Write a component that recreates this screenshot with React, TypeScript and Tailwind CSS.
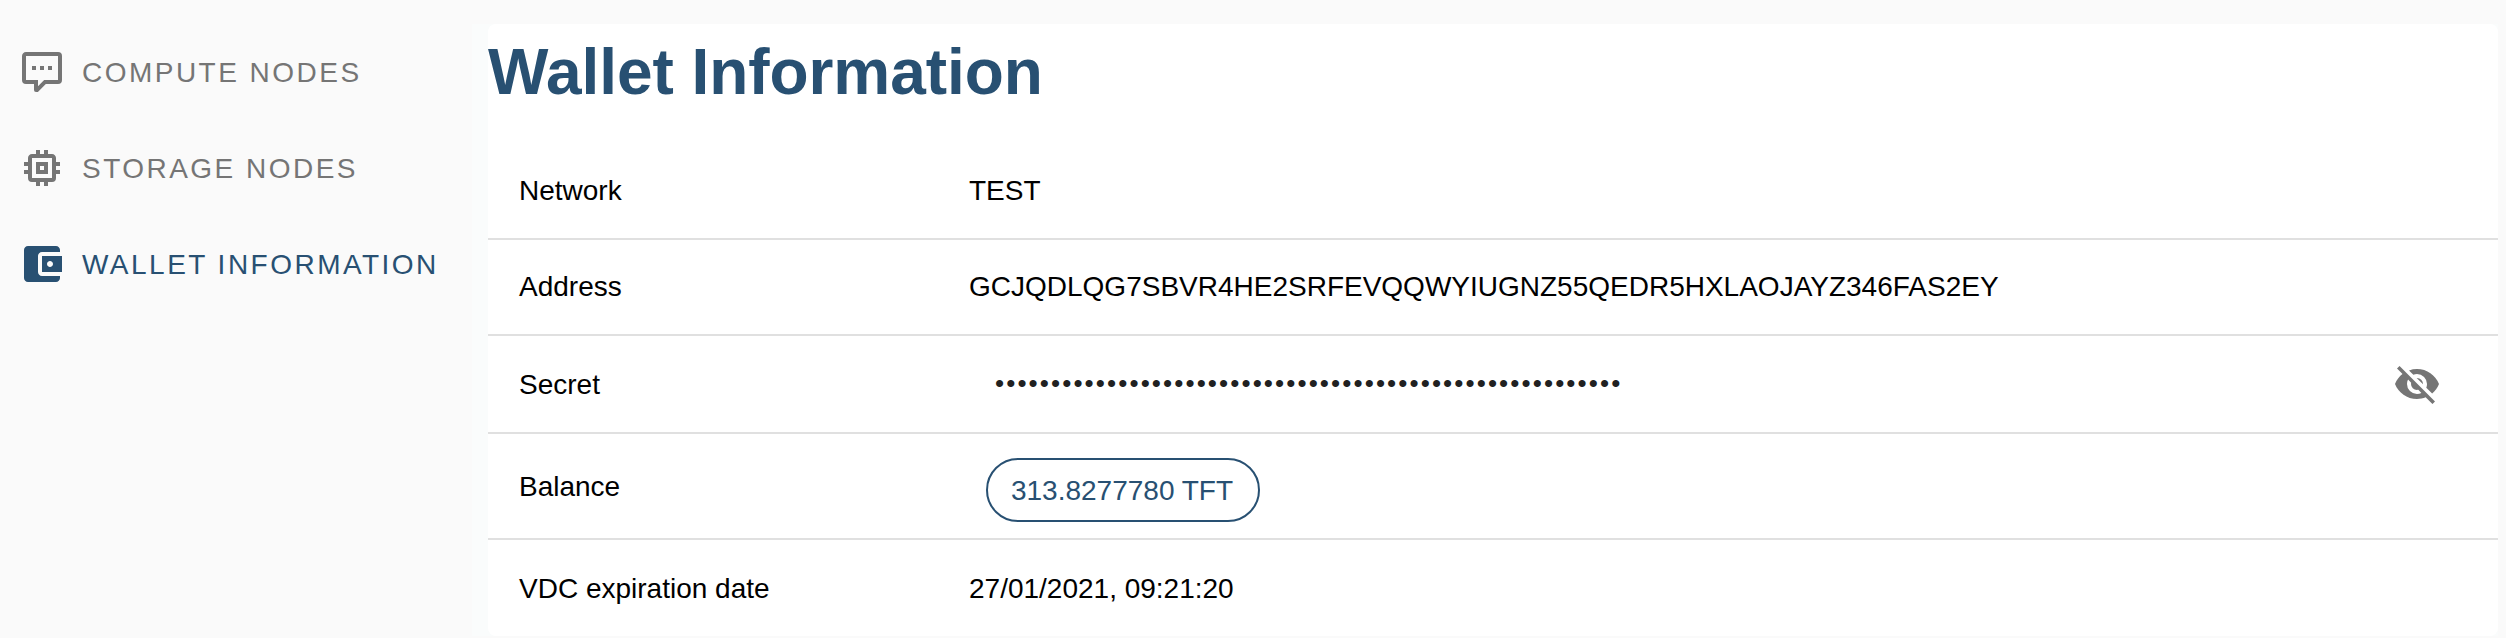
import type { ReactNode } from "react";

const icons = {
  compute:
    "M9,22A1,1 0 0,1 8,21V18H4A2,2 0 0,1 2,16V4C2,2.89 2.9,2 4,2H20A2,2 0 0,1 22,4V16A2,2 0 0,1 20,18H13.9L10.2,21.71C10,21.9 9.75,22 9.5,22V22H9M10,16V19.08L13.08,16H20V4H4V16H10M17,11H15V9H17V11M13,11H11V9H13V11M9,11H7V9H9V11Z",
  storage:
    "M17,17H7V7H17M21,11V9H19V7C19,5.89 18.1,5 17,5H15V3H13V5H11V3H9V5H7C5.89,5 5,5.89 5,7V9H3V11H5V13H3V15H5V17A2,2 0 0,0 7,19H9V21H11V19H13V21H15V19H17A2,2 0 0,0 19,17V15H21V13H19V11M13,13H11V11H13M15,9H9V15H15V9Z",
  wallet:
    "M21 18v1c0 1.1-.9 2-2 2H5c-1.11 0-2-.9-2-2V5c0-1.1.89-2 2-2h14c1.1 0 2 .9 2 2v1h-9c-1.11 0-2 .9-2 2v8c0 1.1.89 2 2 2h9zm-9-2h10V8H12v8zm4-2.5c-.83 0-1.5-.67-1.5-1.5s.67-1.5 1.5-1.5 1.5.67 1.5 1.5-.67 1.5-1.5 1.5z",
  eyeOff:
    "M11.83,9L15,12.16C15,12.11 15,12.05 15,12A3,3 0 0,0 12,9C11.94,9 11.89,9 11.83,9M7.53,9.8L9.08,11.35C9.03,11.56 9,11.77 9,12A3,3 0 0,0 12,15C12.22,15 12.44,14.97 12.65,14.92L14.2,16.47C13.53,16.8 12.79,17 12,17A5,5 0 0,1 7,12C7,11.21 7.2,10.47 7.53,9.8M2,4.27L4.28,6.55L4.73,7C3.08,8.3 1.78,10 1,12C2.73,16.39 7,19.5 12,19.5C13.55,19.5 15.03,19.2 16.38,18.66L16.81,19.08L19.73,22L21,20.73L3.27,3M12,7A5,5 0 0,1 17,12C17,12.64 16.87,13.26 16.64,13.82L19.57,16.75C21.07,15.5 22.27,13.86 23,12C21.27,7.61 17,4.5 12,4.5C10.6,4.5 9.26,4.75 8,5.2L10.17,7.35C10.74,7.13 11.35,7 12,7Z",
};

function Icon({ path }: { path: string }) {
  return (
    <svg viewBox="0 0 24 24" className="block size-12 shrink-0 fill-current" aria-hidden="true">
      <path d={path} />
    </svg>
  );
}

function NavItem({ path, label, active = false }: { path: string; label: string; active?: boolean }) {
  return (
    <a className={`flex h-24 items-center gap-4 pl-[18px] ${active ? "text-[#285072]" : "text-[#757575]"}`}>
      <Icon path={path} />
      <span className="pt-0.5 text-[28px] leading-10 tracking-[2.48px] whitespace-nowrap">{label}</span>
    </a>
  );
}

function Row({ label, height, children }: { label: string; height: string; children: ReactNode }) {
  return (
    <div className={`flex items-center border-b-2 border-[#e0e0e0] pl-[31px] last:border-b-0 ${height}`}>
      <div className="w-[450px] shrink-0">{label}</div>
      <div className="flex flex-1 items-center">{children}</div>
    </div>
  );
}

export default function App() {
  return (
    <div className="flex h-[638px] w-[2506px] overflow-hidden bg-[#fafafa] pt-6 pr-2 font-['Liberation_Sans',Arial,sans-serif]">
      <nav className="w-[472px] shrink-0">
        <NavItem path={icons.compute} label="COMPUTE NODES" />
        <NavItem path={icons.storage} label="STORAGE NODES" />
        <NavItem path={icons.wallet} label="WALLET INFORMATION" active />
      </nav>
      <main className="h-[612px] flex-1 bg-[#fafcfc] pl-4">
        <section className="h-full rounded-lg bg-white">
          <h1 className="h-[120px] pt-[10px] text-[64px] leading-[76px] font-bold tracking-[-0.06px] text-[#285072]">
            Wallet Information
          </h1>
          <div className="text-[28px] leading-10 text-black">
            <Row label="Network" height="h-24">TEST</Row>
            <Row label="Address" height="h-24">GCJQDLQG7SBVR4HE2SRFEVQQWYIUGNZ55QEDR5HXLAOJAYZ346FAS2EY</Row>
            <Row label="Secret" height="h-[98px] pt-px">
              <span className="pb-1 pl-[26px] text-[26px] tracking-[2.1px] text-[#212121]">{"•".repeat(56)}</span>
              <button className="mr-[57px] mb-px ml-auto text-[#757575]" aria-label="Show secret">
                <Icon path={icons.eyeOff} />
              </button>
            </Row>
            <Row label="Balance" height="h-[106px] pt-0.5">
              <span className="mt-1.5 ml-[17px] flex h-16 w-[274px] items-center justify-center rounded-full border-2 border-[#285072] pt-0.5 pr-0.5 whitespace-nowrap text-[#285072]">
                313.8277780 TFT
              </span>
            </Row>
            <Row label="VDC expiration date" height="h-24 pt-0.5">27/01/2021, 09:21:20</Row>
          </div>
        </section>
      </main>
    </div>
  );
}
